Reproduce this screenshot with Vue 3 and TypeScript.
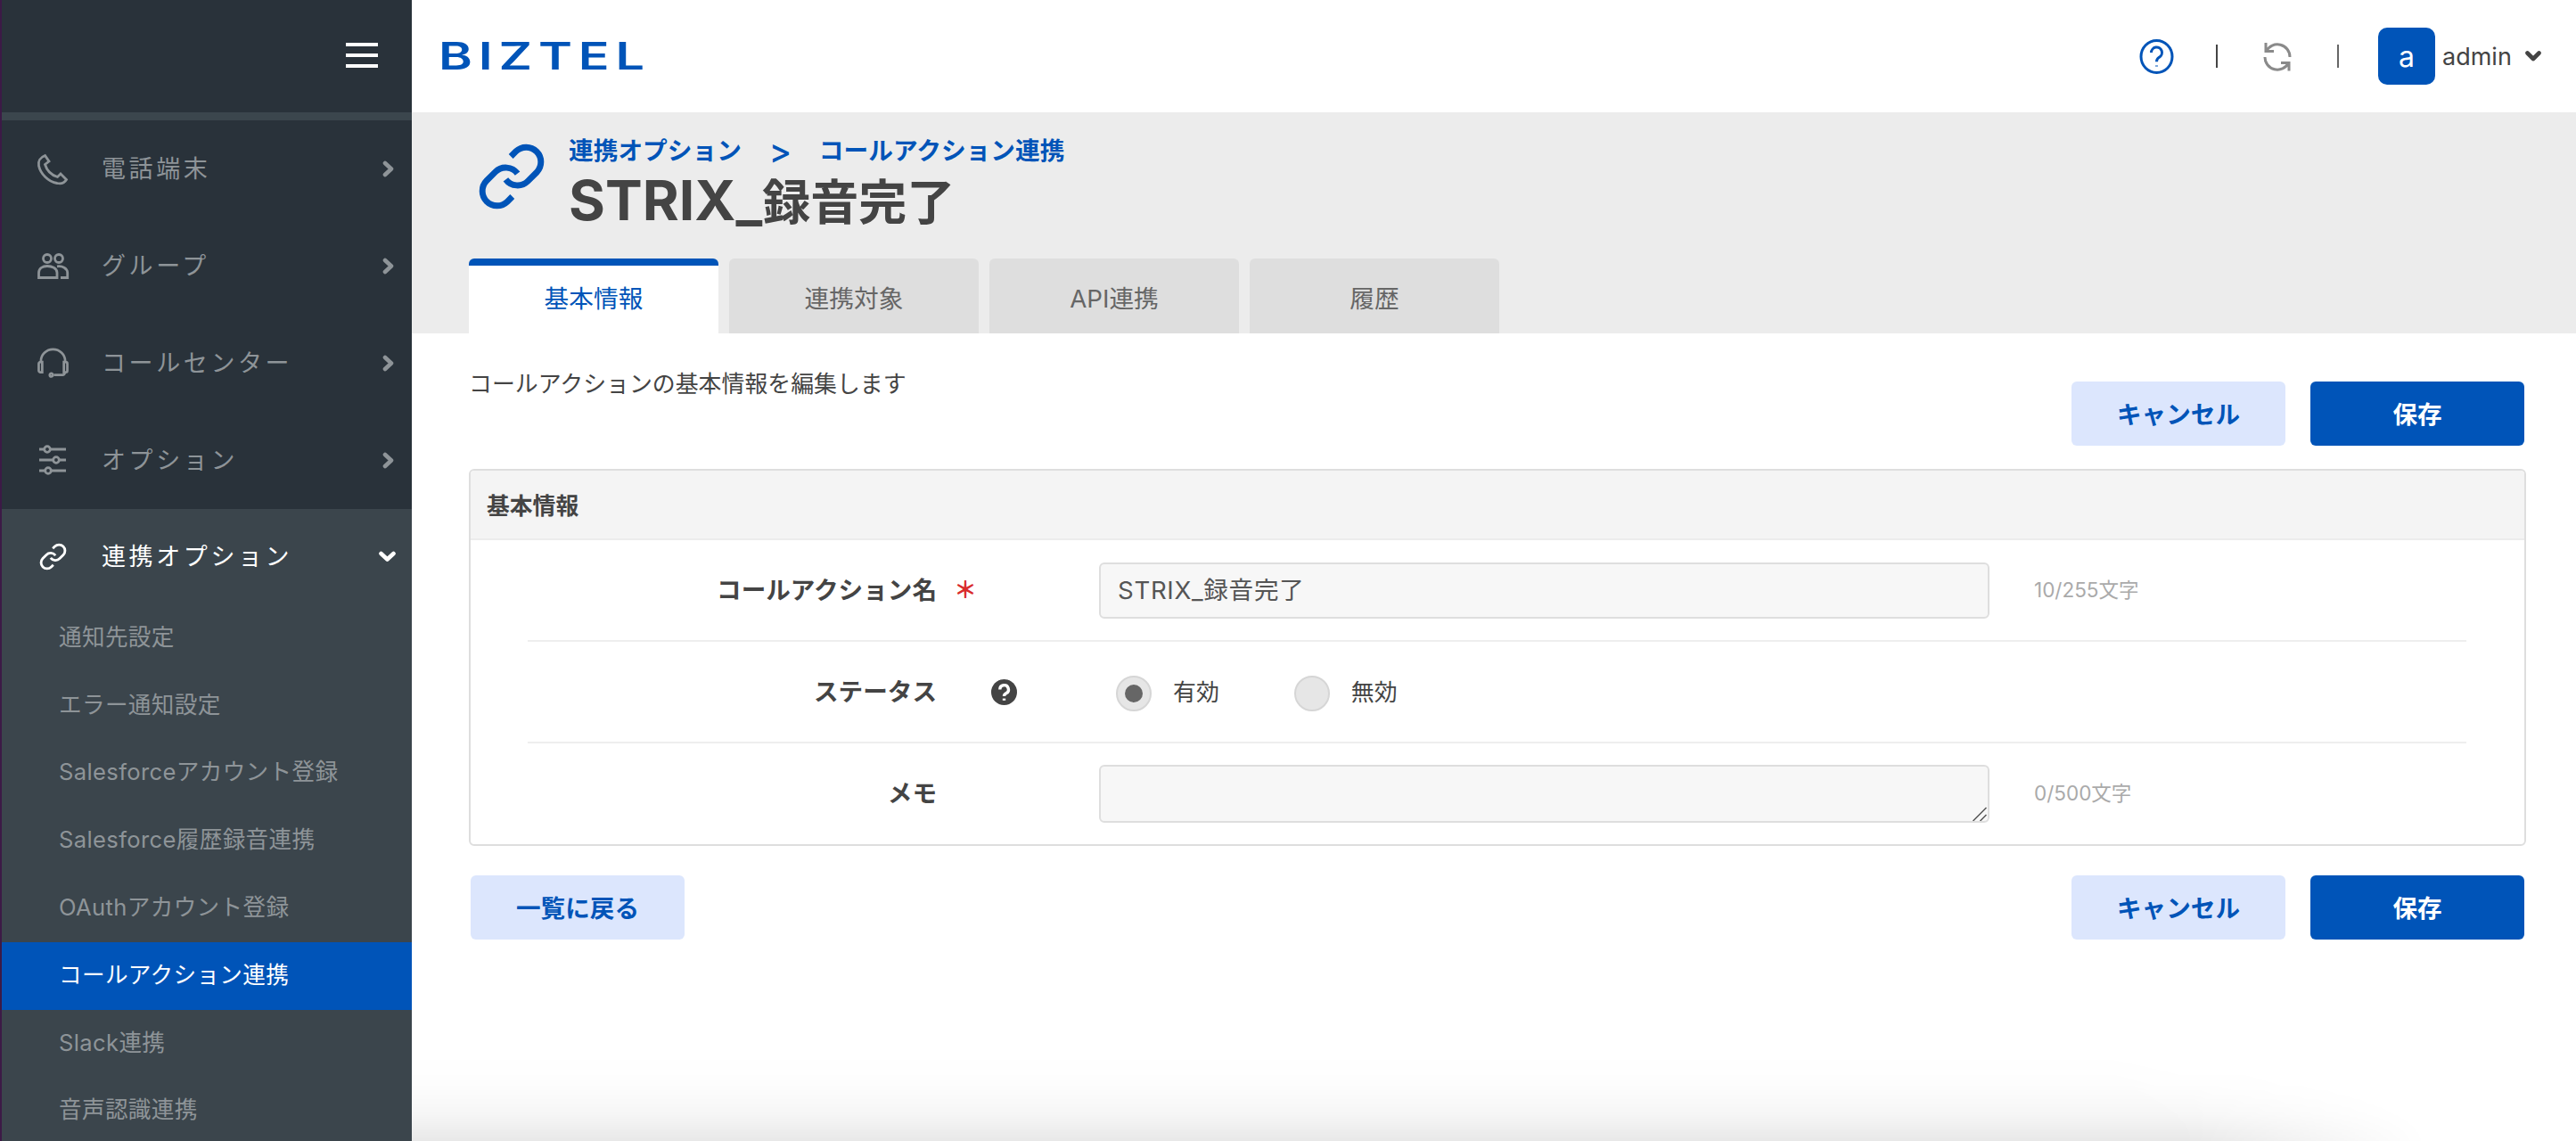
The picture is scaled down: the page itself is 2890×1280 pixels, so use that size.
<script setup lang="ts">
const circle = (x: number, y: number, r: number): string =>
  `M${x - r} ${y}a${r} ${r} 0 1 0 ${2 * r} 0a${r} ${r} 0 1 0 ${-2 * r} 0`

const linkPaths: string[] = [
  'M10 13a5 5 0 0 0 7.54.54l3-3a5 5 0 0 0-7.07-7.07l-1.72 1.71',
  'M14 11a5 5 0 0 0-7.54-.54l-3 3a5 5 0 0 0 7.07 7.07l1.71-1.71'
]

interface NavItem {
  label: string
  box: string
  w: number
  h: number
  paths: string[]
}

const navItems: NavItem[] = [
  {
    label: '電話端末',
    box: '0 0 34 34',
    w: 34,
    h: 34,
    paths: ['M8.5 1.5C3 3.5.5 8 1.5 13C3.5 22 12 31 22 32.5C26.5 33.5 30.5 32 32.5 28.5L26 22L22.5 25.5C16 23.5 10.5 18 8.5 11.5L13 8Z']
  },
  {
    label: 'グループ',
    box: '0 0 35 29',
    w: 35,
    h: 29,
    paths: [
      circle(11, 6, 4.5),
      circle(24, 6, 4.5),
      'M1.5 27.5V22C1.5 17 6 14.5 11 14.5C16 14.5 22 16.5 22 22V27.5Z',
      'M22 14.8C28 14 33.5 17 33.7 22V27.5H26'
    ]
  },
  {
    label: 'コールセンター',
    box: '0 0 36 36',
    w: 35,
    h: 36,
    paths: [
      'M4 17V15a14 13.5 0 0 1 28 0V17',
      'M3.5 16h2a2 2 0 0 1 0 0v12h-2a2 2 0 0 1-2-2v-8a2 2 0 0 1 2-2Z',
      'M32.5 16h-2v12h2a2 2 0 0 0 2-2v-8a2 2 0 0 0-2-2Z',
      'M31.5 28v.5a2.5 2.5 0 0 1-2.5 2.5H19',
      circle(16, 31, 1.8)
    ]
  },
  {
    label: 'オプション',
    box: '0 0 30 33',
    w: 30,
    h: 33,
    paths: [
      'M0 4H5.5M12.5 4H30',
      circle(9, 4, 3.3),
      'M0 16H15.5M22.5 16H30',
      circle(19, 16, 3.3),
      'M0 28H6.5M13.5 28H30',
      circle(10, 28, 3.3)
    ]
  }
]

const subItems: { label: string; active?: boolean }[] = [
  { label: '通知先設定' },
  { label: 'エラー通知設定' },
  { label: 'Salesforceアカウント登録' },
  { label: 'Salesforce履歴録音連携' },
  { label: 'OAuthアカウント登録' },
  { label: 'コールアクション連携', active: true },
  { label: 'Slack連携' },
  { label: '音声認識連携' }
]

const tabs: { label: string; active?: boolean }[] = [
  { label: '基本情報', active: true },
  { label: '連携対象' },
  { label: 'API連携' },
  { label: '履歴' }
]
</script>

<template>
  <div class="app">
    <aside class="side">
      <div class="side-top">
        <div class="burger"><i></i><i></i><i></i></div>
      </div>
      <div class="side-strip"></div>
      <nav>
        <a v-for="item in navItems" :key="item.label" class="nav-item">
          <span class="nav-icon">
            <svg :viewBox="item.box" :width="item.w" :height="item.h" class="line-icon">
              <path v-for="d in item.paths" :key="d" :d="d" />
            </svg>
          </span>
          <span class="nav-label">{{ item.label }}</span>
          <svg class="chev" viewBox="0 0 19 19" width="19" height="19">
            <path d="M7 3L14 9.5L7 16" />
          </svg>
        </a>
        <div class="group">
          <a class="nav-item open">
            <span class="nav-icon">
              <svg viewBox="2 2 20 20" width="27" height="27" class="line-icon">
                <path v-for="d in linkPaths" :key="d" :d="d" stroke-width="2.1" />
              </svg>
            </span>
            <span class="nav-label">連携オプション</span>
            <svg class="chev" viewBox="0 0 19 19" width="19" height="19">
              <path d="M2.5 6L9.5 12.5L16.5 6" />
            </svg>
          </a>
          <a v-for="s in subItems" :key="s.label" class="sub-item" :class="{ active: s.active }">{{ s.label }}</a>
        </div>
      </nav>
    </aside>

    <div class="main">
      <header class="topbar">
        <span class="logo">BIZTEL</span>
        <div class="top-right">
          <svg class="help" viewBox="0 0 39 39" width="39" height="39">
            <ellipse cx="19.5" cy="19.5" rx="17.5" ry="18" />
            <path d="M13.5 15a6 6 0 1 1 8.8 5.3c-2 1.2-2.8 2.4-2.8 5" />
            <path d="M19.5 29.5v1" />
          </svg>
          <span class="sep sep-a"></span>
          <svg class="refresh" viewBox="0 0 32 35" width="32" height="35">
            <path d="M3.5 11.5A14 14 0 0 1 30 18M3 2V11.5H12" />
            <path d="M2 18A14 14 0 0 0 28.5 24.5M29 33.5V24.5H20" />
          </svg>
          <span class="sep sep-b"></span>
          <span class="avatar">a</span>
          <span class="user">admin</span>
          <svg class="user-chev" viewBox="0 0 18 12" width="18" height="12">
            <path d="M2.5 2.5L9 9L15.5 2.5" />
          </svg>
        </div>
      </header>

      <section class="band">
        <div class="head">
          <svg class="head-icon" viewBox="2 2 20 20" width="66" height="66">
            <path v-for="d in linkPaths" :key="d" :d="d" />
          </svg>
          <div>
            <div class="crumbs">
              <span>連携オプション</span>
              <span class="crumb-sep">&gt;</span>
              <span>コールアクション連携</span>
            </div>
            <h1 class="title"><span class="title-latin">STRIX_</span>録音完了</h1>
          </div>
        </div>
        <div class="tabs">
          <div v-for="t in tabs" :key="t.label" class="tab" :class="{ active: t.active }">{{ t.label }}</div>
        </div>
      </section>

      <section class="content">
        <div class="intro">
          <p class="desc">コールアクションの基本情報を編集します</p>
          <div class="actions">
            <button class="btn light">キャンセル</button>
            <button class="btn solid">保存</button>
          </div>
        </div>

        <div class="card">
          <div class="card-head">基本情報</div>
          <div class="row">
            <div class="label">コールアクション名</div>
            <div class="mark"><span class="req">＊</span></div>
            <input class="field" type="text" value="STRIX_録音完了" readonly />
            <span class="count">10/255文字</span>
          </div>
          <div class="row">
            <div class="label">ステータス</div>
            <div class="mark">
              <svg class="q" viewBox="0 0 29 29" width="29" height="29">
                <circle cx="14.5" cy="14.5" r="14.5" />
                <path d="M9.8 11.5a4.8 4.8 0 1 1 7 4.2c-1.6.9-2.3 1.6-2.3 3.3" />
                <path d="M14.5 21.6v2.2" />
              </svg>
            </div>
            <div class="radios">
              <span class="radio on"></span>
              <span class="radio-text first">有効</span>
              <span class="radio"></span>
              <span class="radio-text">無効</span>
            </div>
          </div>
          <div class="row last">
            <div class="label">メモ</div>
            <div class="mark"></div>
            <div class="area-wrap">
              <textarea class="field area" readonly></textarea>
              <svg class="grip" viewBox="0 0 16 16" width="16" height="16">
                <path d="M.5 16L15.5 1M8.5 16L15.5 9" />
              </svg>
            </div>
            <span class="count">0/500文字</span>
          </div>
        </div>

        <div class="foot">
          <button class="btn light">一覧に戻る</button>
          <div class="actions">
            <button class="btn light">キャンセル</button>
            <button class="btn solid">保存</button>
          </div>
        </div>
      </section>

      <div class="shade"></div>
    </div>
  </div>
</template>

<style scoped>
.app {
  display: flex;
  width: 2890px;
  height: 1280px;
  overflow: hidden;
  font-family: Inter, "Noto Sans CJK JP", sans-serif;
  color: #444;
  background: #fff;
}

/* sidebar */
.side {
  flex: 0 0 462px;
  box-sizing: border-box;
  height: 1280px;
  overflow: hidden;
  background: #29323a;
  border-left: 2px solid #3c1a46;
}
.side-top {
  height: 126px;
  display: flex;
  justify-content: flex-end;
  padding: 48px 38px 0 0;
  box-sizing: border-box;
}
.burger {
  width: 36px;
  display: flex;
  flex-direction: column;
  gap: 8px;
}
.burger i {
  display: block;
  height: 4px;
  background: #fff;
}
.side-strip {
  height: 9px;
  background: #3b464d;
}
.nav-item {
  display: flex;
  align-items: center;
  height: 109px;
  padding: 0 18px 0 39px;
  color: #8e9498;
}
.nav-item .chev {
  fill: none;
  stroke: #8e9498;
  stroke-width: 4.6;
  stroke-linejoin: round;
  stroke-linecap: round;
}
.nav-icon {
  flex: 0 0 36px;
  height: 40px;
  margin-right: 37px;
  display: flex;
  align-items: center;
  justify-content: center;
}
.line-icon {
  fill: none;
  stroke: #8e9498;
  stroke-width: 2.8;
  overflow: visible;
}
.nav-label {
  flex: 1;
  font-size: 27px;
  letter-spacing: 3.6px;
  white-space: nowrap;
  padding-bottom: 4px;
}
.group {
  background: #3b454c;
  height: 710px;
}
.nav-item.open {
  height: 107px;
  color: #fff;
}
.nav-item.open .line-icon {
  stroke: #fff;
}
.nav-item.open .chev {
  stroke: #fff;
}
.sub-item {
  display: flex;
  align-items: center;
  height: 75.8px;
  box-sizing: border-box;
  padding: 0 0 7px 64px;
  font-size: 25.6px;
  letter-spacing: 0.35px;
  color: #8e9498;
  white-space: nowrap;
}
.sub-item.active {
  background: #0054b8;
  color: #fff;
}

/* main */
.main {
  position: relative;
  flex: 1;
  display: flex;
  flex-direction: column;
  min-width: 0;
}
.topbar {
  height: 126px;
  flex: none;
  display: flex;
  align-items: center;
  justify-content: space-between;
  padding: 0 39px 0 30px;
  box-sizing: border-box;
}
.logo {
  display: inline-block;
  font-size: 42px;
  font-weight: 600;
  letter-spacing: 5px;
  color: #0054b8;
  line-height: 1;
  transform: scaleX(1.37);
  transform-origin: left center;
}
.top-right {
  display: flex;
  align-items: center;
}
.help {
  fill: none;
  stroke: #0054b8;
  stroke-width: 3;
  margin-right: 47px;
}
.sep {
  width: 2px;
  height: 26px;
  background: #444;
}
.sep-a { margin-right: 51px; }
.sep-b { background: #666; margin-left: 51px; margin-right: 44px; }
.refresh {
  fill: none;
  stroke: #8a8a8a;
  stroke-width: 3;
}
.avatar {
  width: 64px;
  height: 64px;
  border-radius: 10px;
  background: #0054b8;
  color: #fff;
  font-size: 32px;
  display: flex;
  align-items: center;
  justify-content: center;
}
.user {
  margin-left: 8px;
  font-size: 27px;
  width: 76px;
  letter-spacing: 0;
}
.user-chev {
  margin-left: 17px;
  fill: none;
  stroke: #444;
  stroke-width: 4.6;
  stroke-linejoin: round;
  stroke-linecap: round;
}

.band {
  height: 248px;
  flex: none;
  box-sizing: border-box;
  background: #ececec;
  display: flex;
  flex-direction: column;
  padding: 27px 0 0 64px;
}
.head {
  display: flex;
  margin-left: 15px;
}
.head-icon {
  margin-top: 12px;
  margin-right: 31px;
  fill: none;
  stroke: #0054b8;
  stroke-width: 2.1;
  overflow: visible;
}
.crumbs {
  display: flex;
  align-items: center;
  font-size: 27.7px;
  font-weight: 700;
  line-height: 32px;
  height: 32px;
  color: #0054b8;
}
.crumb-sep {
  width: 87px;
  text-align: center;
  font-size: 38px;
  font-weight: 500;
}
.title {
  margin: 7px 0 0;
  font-size: 54px;
  line-height: 72px;
  height: 72px;
  font-weight: 700;
  color: #444;
  white-space: nowrap;
}
.title-latin {
  font-size: 62.5px;
  line-height: 1;
}
.tabs {
  margin-top: auto;
  display: flex;
  gap: 12px;
}
.tab {
  width: 280px;
  height: 84px;
  box-sizing: border-box;
  border-radius: 6px 6px 0 0;
  background: #dedede;
  color: #666;
  font-size: 27.7px;
  display: flex;
  align-items: center;
  justify-content: center;
  padding: 8px 0 6px;
}
.tab.active {
  background: #fff;
  color: #0054b8;
  border-top: 8px solid #0054b8;
  padding: 0 0 6px;
}

.content {
  padding: 37px 56px 0 64px;
}
.intro {
  display: flex;
  justify-content: space-between;
  align-items: flex-start;
}
.desc {
  margin: 0;
  font-size: 25.9px;
  line-height: 40px;
}
.actions {
  display: flex;
  gap: 28px;
  margin-right: 2px;
}
.intro .actions {
  margin-top: 17px;
}
.btn {
  width: 240px;
  height: 72px;
  border: 0;
  border-radius: 6px;
  font-family: inherit;
  font-size: 27.6px;
  font-weight: 700;
  padding: 0 0 3px;
}
.btn.light {
  background: #dce6fd;
  color: #0054b8;
}
.btn.solid {
  background: #0054b8;
  color: #fff;
}
.card {
  margin-top: 26px;
  box-sizing: border-box;
  height: 423px;
  border: 2px solid #dedede;
  border-radius: 6px;
}
.card-head {
  height: 78px;
  box-sizing: border-box;
  background: #f4f4f4;
  border-bottom: 2px solid #ececec;
  padding: 0 0 2px 18px;
  display: flex;
  align-items: center;
  font-size: 25.8px;
  font-weight: 700;
  border-radius: 4px 4px 0 0;
}
.row {
  display: flex;
  align-items: center;
  height: 114px;
  box-sizing: border-box;
  margin: 0 65px 0 64px;
  border-bottom: 2px solid #eeeeee;
}
.row.last {
  height: 112px;
  border-bottom: 0;
}
.label {
  width: 459px;
  flex: none;
  text-align: right;
  font-size: 27.6px;
  font-weight: 700;
  padding-bottom: 4px;
  box-sizing: border-box;
}
.mark {
  width: 182px;
  flex: none;
  display: flex;
  align-items: center;
}
.req {
  margin-left: 19px;
  font-size: 26px;
  line-height: 1;
  font-weight: 700;
  color: #d92c2c;
}
.q {
  margin-left: 61px;
  fill: #444;
  stroke: none;
}
.q path {
  fill: none;
  stroke: #fff;
  stroke-width: 3.4;
}
.field {
  flex: none;
  width: 999px;
  height: 63px;
  box-sizing: border-box;
  border: 2px solid #dedede;
  border-radius: 6px;
  background: #f7f7f7;
  padding: 0 19px 4px;
  font-family: inherit;
  font-size: 27.6px;
  letter-spacing: 0.7px;
  color: #555;
  outline: none;
  margin: 0;
}
.area-wrap {
  position: relative;
  flex: none;
  width: 999px;
  height: 65px;
}
.area {
  height: 65px;
  resize: none;
  display: block;
}
.grip {
  position: absolute;
  right: 3px;
  bottom: 2px;
  fill: none;
  stroke: #555;
  stroke-width: 1.5;
}
.count {
  margin-left: 50px;
  font-size: 22.5px;
  color: #aaa;
  padding-bottom: 4px;
}
.radios {
  display: flex;
  align-items: center;
  margin-left: 19px;
  padding-top: 4px;
}
.radio {
  width: 40px;
  height: 40px;
  box-sizing: border-box;
  border: 2px solid #d6d6d6;
  border-radius: 50%;
  background: #e6e6e6;
  display: flex;
  align-items: center;
  justify-content: center;
}
.radio.on::after {
  content: "";
  width: 20px;
  height: 20px;
  border-radius: 50%;
  background: #666;
}
.radio-text {
  margin-left: 24px;
  font-size: 25.9px;
  padding-bottom: 7px;
}
.radio-text.first {
  margin-right: 84px;
}
.foot {
  margin-top: 33px;
  padding-left: 2px;
  display: flex;
  justify-content: space-between;
}
.shade {
  position: absolute;
  left: 0;
  right: 0;
  bottom: 0;
  height: 100px;
  pointer-events: none;
  background: linear-gradient(to top, rgba(0, 0, 0, 0.09), rgba(0, 0, 0, 0.035) 30%, rgba(0, 0, 0, 0.008) 65%, transparent);
  -webkit-mask-image: radial-gradient(ellipse 2260px 220px at 0 100%, #000 88%, transparent 100%);
  mask-image: radial-gradient(ellipse 2260px 220px at 0 100%, #000 88%, transparent 100%);
}
</style>

<style>
html, body {
  margin: 0;
  overflow: hidden;
}
</style>
